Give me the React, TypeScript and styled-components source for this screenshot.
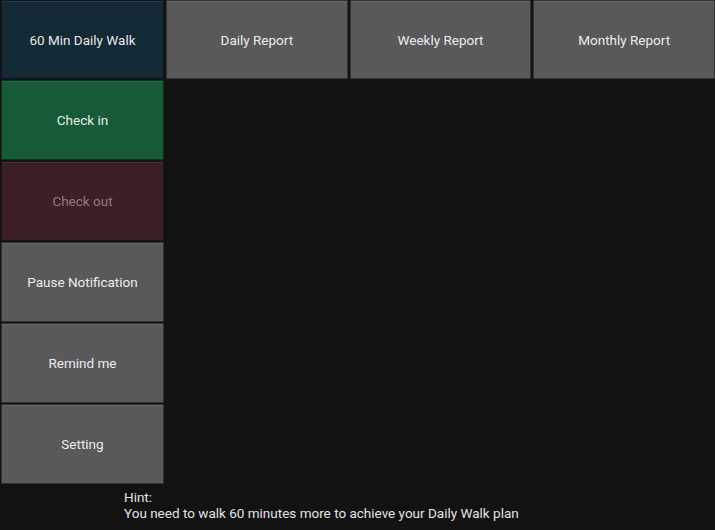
import styled, { createGlobalStyle } from "styled-components"

const GlobalStyle = createGlobalStyle`
  html, body {
    margin: 0;
    padding: 0;
    background: #121212;
  }
  body {
    font-family: Roboto, "Liberation Sans", sans-serif;
  }
`

const Screen = styled.main`
  width: 715px;
  height: 530px;
  background: #121212;
  display: flex;
  flex-direction: column;
  overflow: hidden;
`

const Body = styled.div`
  display: grid;
  grid-template-columns: 164px 1fr;
  column-gap: 2px;
`

const SideMenu = styled.nav`
  display: flex;
  flex-direction: column;
  gap: 1px;
  padding-left: 1px;
`

const TopBar = styled.div`
  display: grid;
  grid-template-columns: repeat(3, 1fr);
  column-gap: 2px;
  height: 79px;
  align-self: start;
`

type Tone = "header" | "green" | "red" | "grey"

const tones: Record<Tone, { bg: string; fg: string }> = {
  header: { bg: "#132935", fg: "#e6e6e6" },
  green: { bg: "#165a37", fg: "#e4ece6" },
  red: { bg: "#3a2023", fg: "#8e7c7e" },
  grey: { bg: "#595959", fg: "#ececec" },
}

const Tile = styled.button<{ $tone: Tone; $h?: number }>`
  height: ${(p) => p.$h ?? 80}px;
  margin: 0;
  padding: 0;
  border: 1px solid rgba(0, 0, 0, 0.45);
  border-radius: 1px;
  background: ${(p) => tones[p.$tone].bg};
  color: ${(p) => tones[p.$tone].fg};
  box-shadow: inset 0 1px 0 rgba(255, 255, 255, 0.08);
  font-family: Roboto, "Liberation Sans", sans-serif;
  font-size: 13.5px;
  display: flex;
  align-items: center;
  justify-content: center;
`

const Hint = styled.p`
  margin: 5px 0 0 124px;
  color: #e2e2e2;
  font-size: 13.5px;
  line-height: 16px;
`

function App() {
  return (
    <>
      <GlobalStyle />
      <Screen>
        <Body>
          <SideMenu>
            <Tile $tone="header" $h={79}>60 Min Daily Walk</Tile>
            <Tile $tone="green">Check in</Tile>
            <Tile $tone="red">Check out</Tile>
            <Tile $tone="grey">Pause Notification</Tile>
            <Tile $tone="grey">Remind me</Tile>
            <Tile $tone="grey">Setting</Tile>
          </SideMenu>

          <TopBar>
            <Tile $tone="grey" $h={79}>Daily Report</Tile>
            <Tile $tone="grey" $h={79}>Weekly Report</Tile>
            <Tile $tone="grey" $h={79}>Monthly Report</Tile>
          </TopBar>
        </Body>

        <Hint>
          Hint:
          <br />
          You need to walk 60 minutes more to achieve your Daily Walk plan
        </Hint>
      </Screen>
    </>
  )
}

export default App
